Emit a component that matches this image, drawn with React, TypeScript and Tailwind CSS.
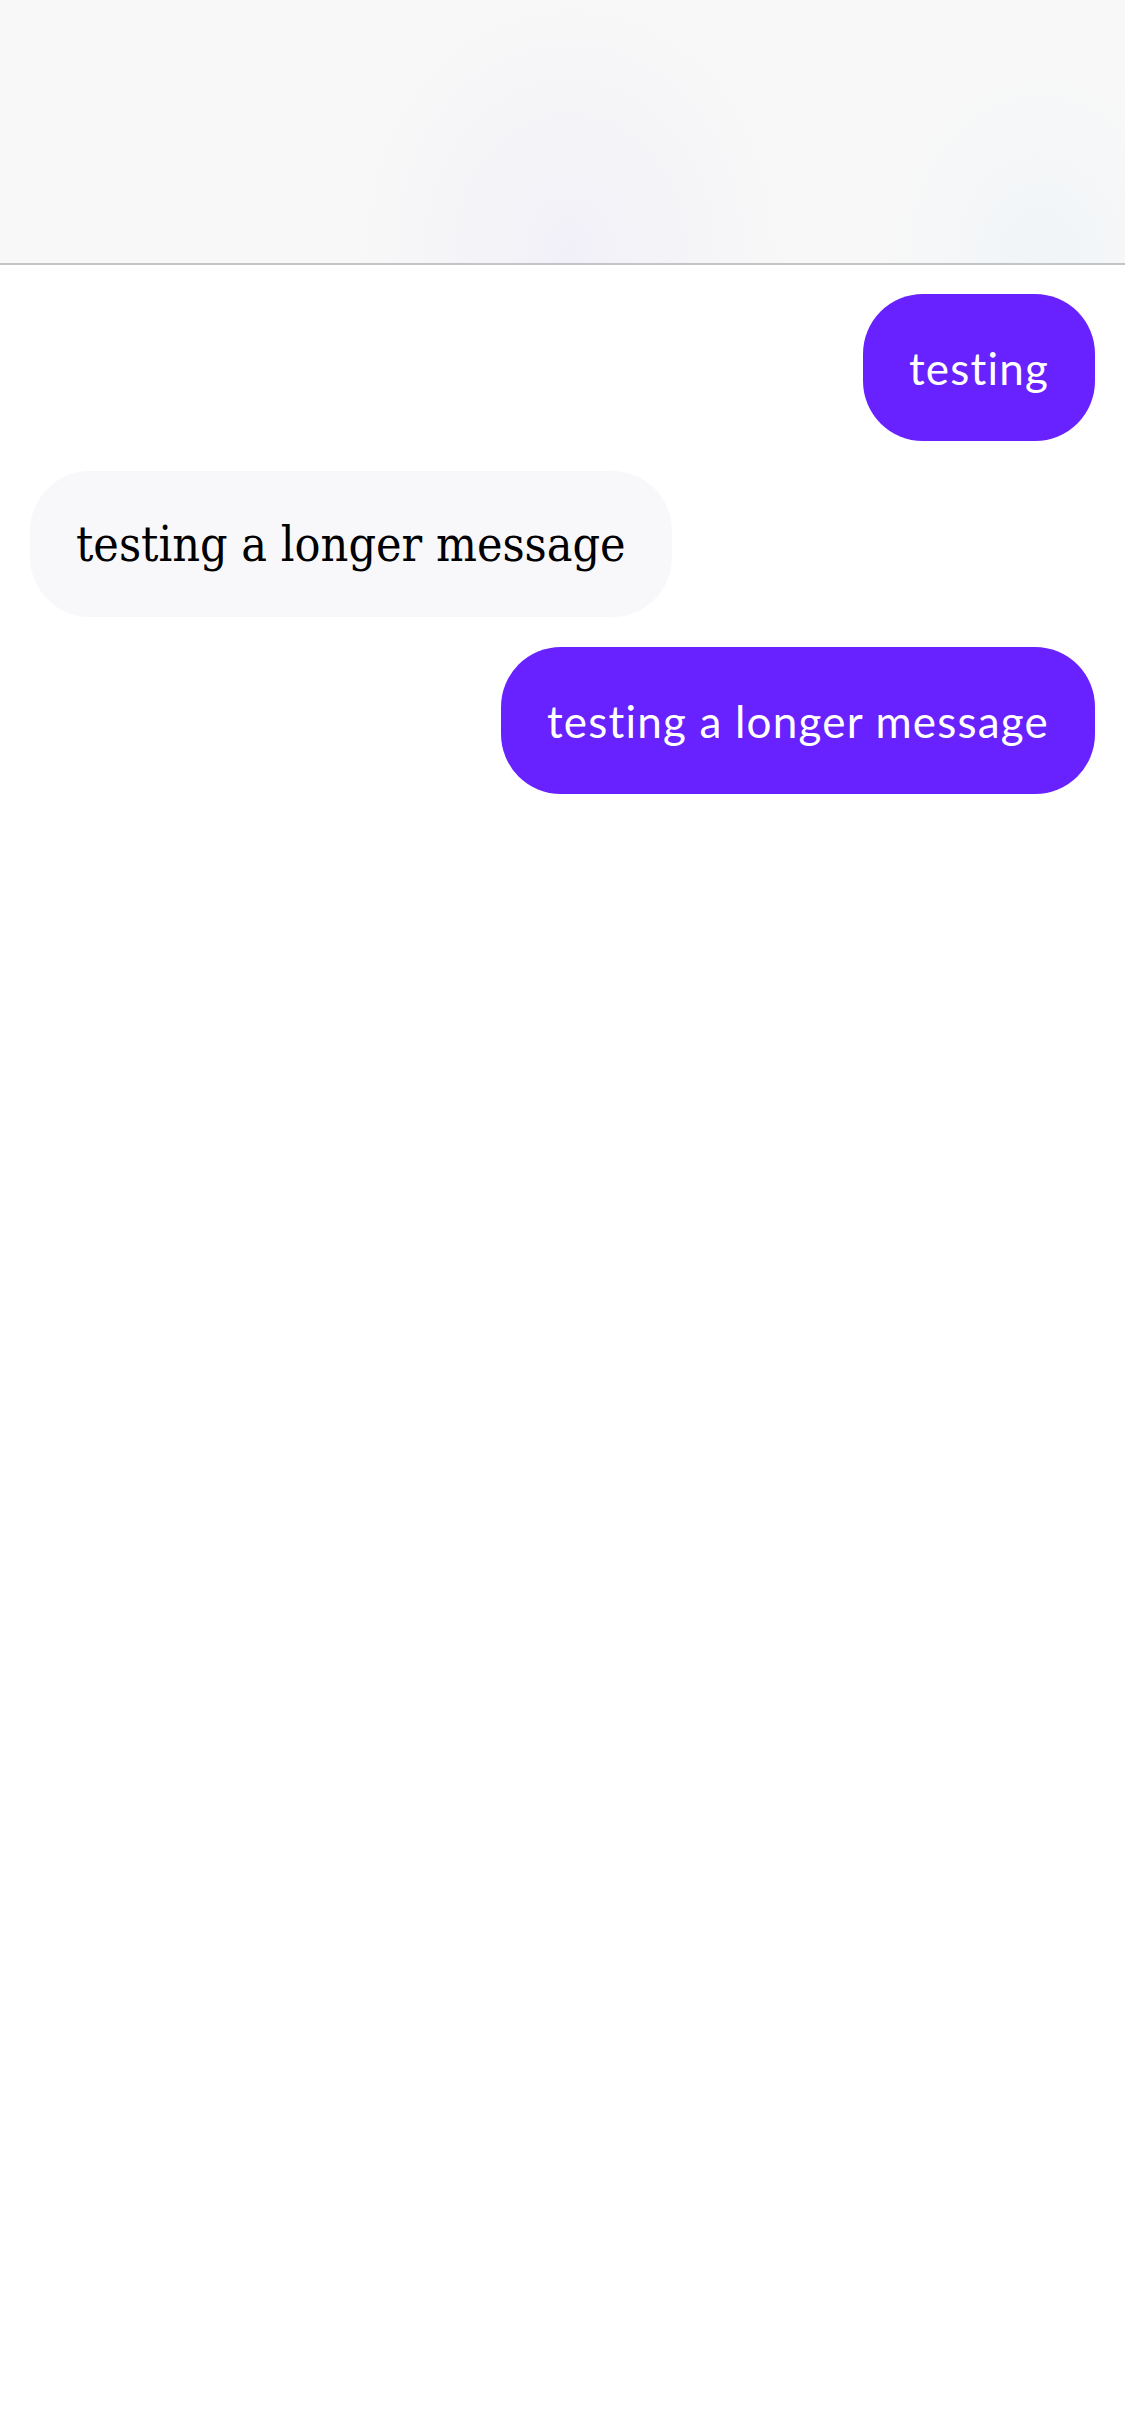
const messages = [
  { id: 1, text: "testing", mine: true },
  { id: 2, text: "testing a longer message", mine: false },
  { id: 3, text: "testing a longer message", mine: true },
]

function Bubble({ text, mine }: { text: string; mine: boolean }) {
  if (mine) {
    return (
      <div className="flex justify-end">
        <div className="h-[147px] px-[46px] flex items-center rounded-[60px] bg-[#6821ff] text-white text-[44px] font-['Lato',sans-serif] tracking-[1.2px]">
          {text}
        </div>
      </div>
    )
  }
  return (
    <div className="flex justify-start">
      <div className="h-[146px] px-[46px] flex items-center rounded-[60px] bg-[#f8f8fa] text-black text-[48px] font-['DejaVu_Serif_Condensed','DejaVu_Serif',serif] [font-stretch:condensed]">
        {text}
      </div>
    </div>
  )
}

export default function App() {
  return (
    <div className="min-h-[2436px] bg-white">
      <div className="h-[265px] border-b-2 border-[#c4c4c8] bg-[#f8f8f8] bg-[radial-gradient(ellipse_220px_260px_at_570px_250px,#f1f0f8_0%,#f4f4f8_40%,transparent_100%),radial-gradient(ellipse_160px_200px_at_1040px_260px,#f1f5f8_0%,transparent_100%)]" />
      <div className="flex flex-col gap-[30px] px-[30px] pt-[29px]">
        {messages.map((m) => (
          <Bubble key={m.id} text={m.text} mine={m.mine} />
        ))}
      </div>
    </div>
  )
}
